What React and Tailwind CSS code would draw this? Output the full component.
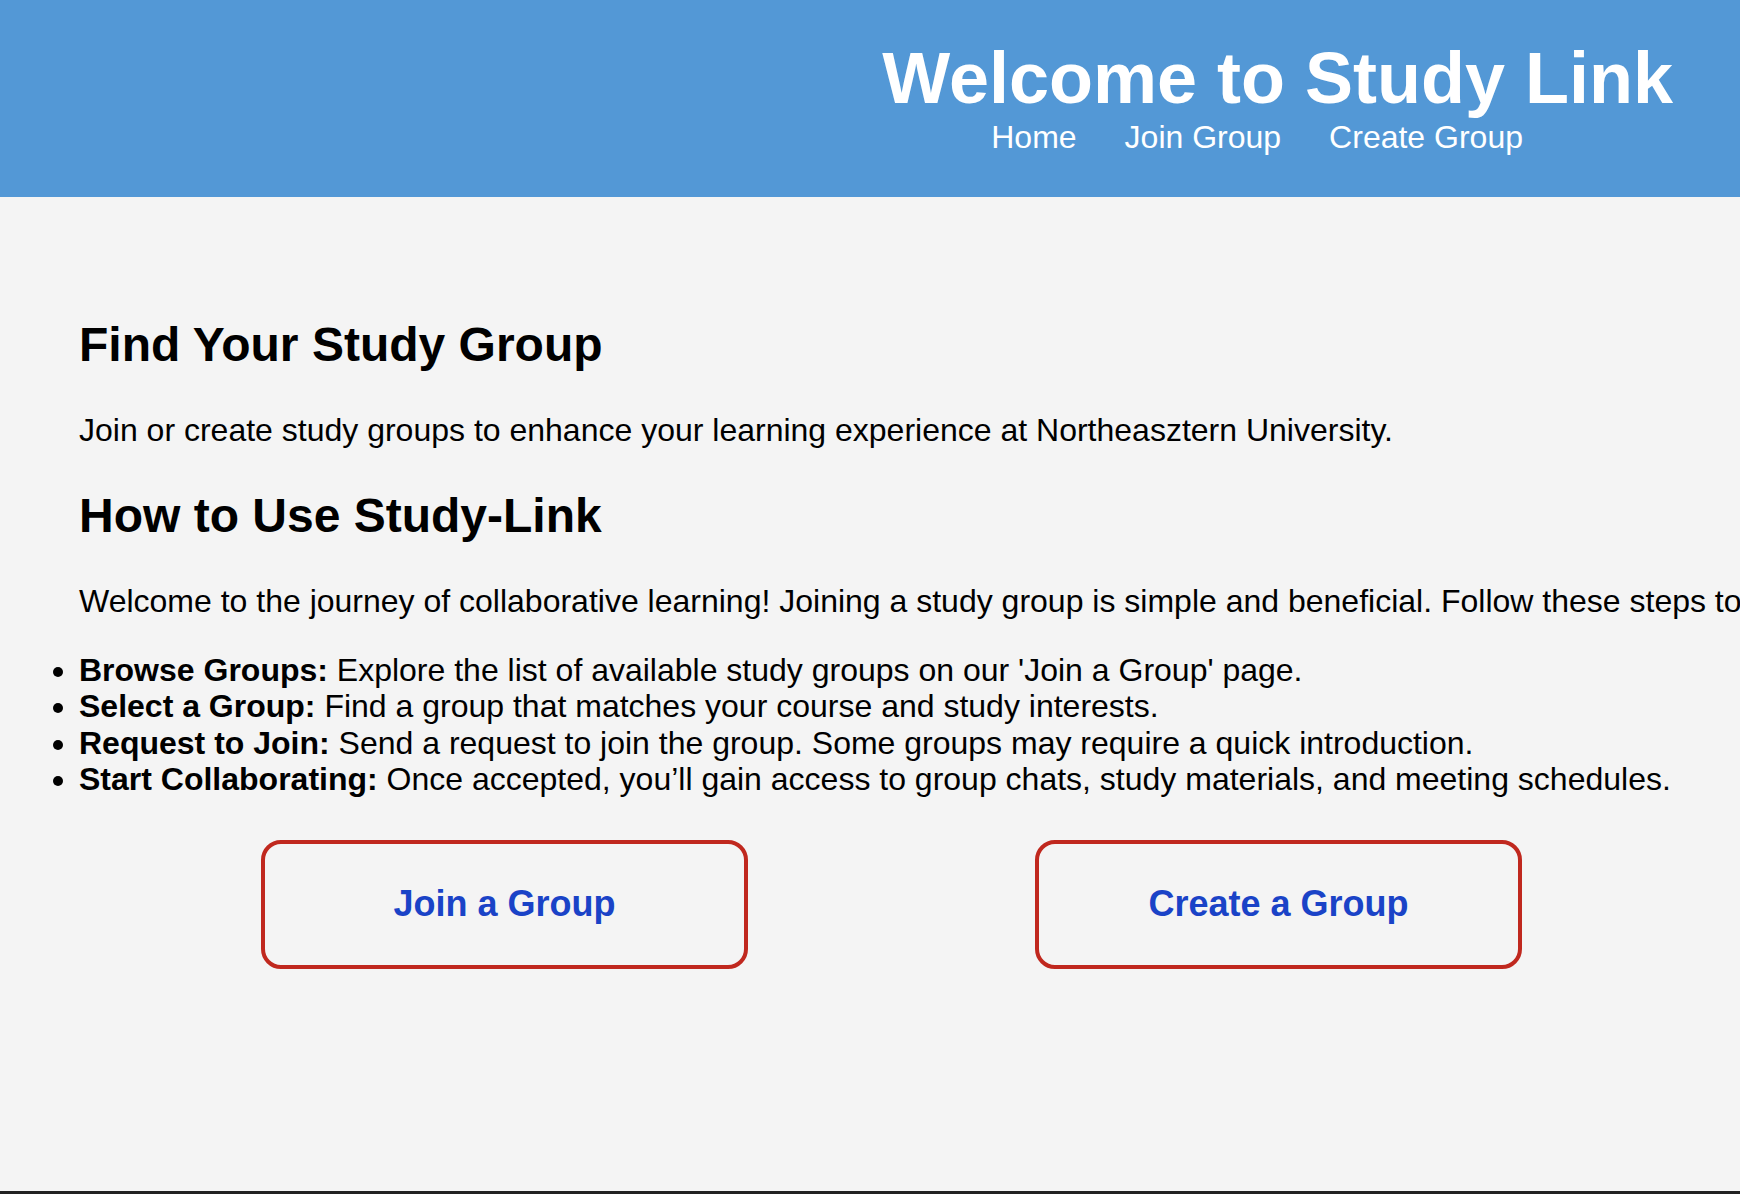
import React from "react";

const steps = [
  { title: "Browse Groups:", text: " Explore the list of available study groups on our 'Join a Group' page." },
  { title: "Select a Group:", text: " Find a group that matches your course and study interests." },
  { title: "Request to Join:", text: " Send a request to join the group. Some groups may require a quick introduction." },
  { title: "Start Collaborating:", text: " Once accepted, you\u2019ll gain access to group chats, study materials, and meeting schedules." },
];

export default function App() {
  return (
    <div className="h-[1194px] w-full overflow-hidden flex flex-col bg-[#f4f4f4] text-black font-['Liberation_Sans',Arial,sans-serif]">
      {/* header */}
      <header className="h-[197px] shrink-0 bg-[#5398d6] text-white flex justify-end pr-[67px] pt-[40px]">
        <div className="flex flex-col items-start">
          <h1 className="text-[72px] leading-[76px] font-bold whitespace-nowrap">Welcome to Study Link</h1>
          <nav className="mt-[3px] ml-[109px] flex gap-[48px] text-[32px] leading-[36px] whitespace-nowrap">
            <a href="#">Home</a>
            <a href="#">Join Group</a>
            <a href="#">Create Group</a>
          </nav>
        </div>
      </header>

      {/* main */}
      <main className="flex-1 pt-[120px]">
        <section className="pl-[79px] whitespace-nowrap">
          <h2 className="text-[48px] leading-[56px] font-bold">Find Your Study Group</h2>
          <p className="mt-[38.6px] text-[32px] leading-[36px]">
            Join or create study groups to enhance your learning experience at Northeasztern University.
          </p>
          <h2 className="mt-[40.4px] text-[48px] leading-[56px] font-bold">How to Use Study-Link</h2>
          <p className="mt-[38.6px] text-[32px] leading-[36px]">
            Welcome to the journey of collaborative learning! Joining a study group is simple and beneficial. Follow these steps to
          </p>
        </section>

        <ul className="mt-[33px] pl-[79px] list-disc text-[32px] leading-[36.6px] whitespace-nowrap">
          {steps.map((s) => (
            <li key={s.title}>
              <strong className="font-bold">{s.title}</strong>
              {s.text}
            </li>
          ))}
        </ul>

        <div className="mt-[42px] pl-[261px] flex gap-[287px]">
          <button className="w-[487px] h-[129px] border-4 border-[#c0281e] rounded-[20px] text-[#1a43c7] text-[36px] leading-[40px] font-bold">
            Join a Group
          </button>
          <button className="w-[487px] h-[129px] border-4 border-[#c0281e] rounded-[20px] text-[#1a43c7] text-[36px] leading-[40px] font-bold">
            Create a Group
          </button>
        </div>
      </main>

      <footer className="h-[3px] shrink-0 bg-[#222222]" />
    </div>
  );
}
